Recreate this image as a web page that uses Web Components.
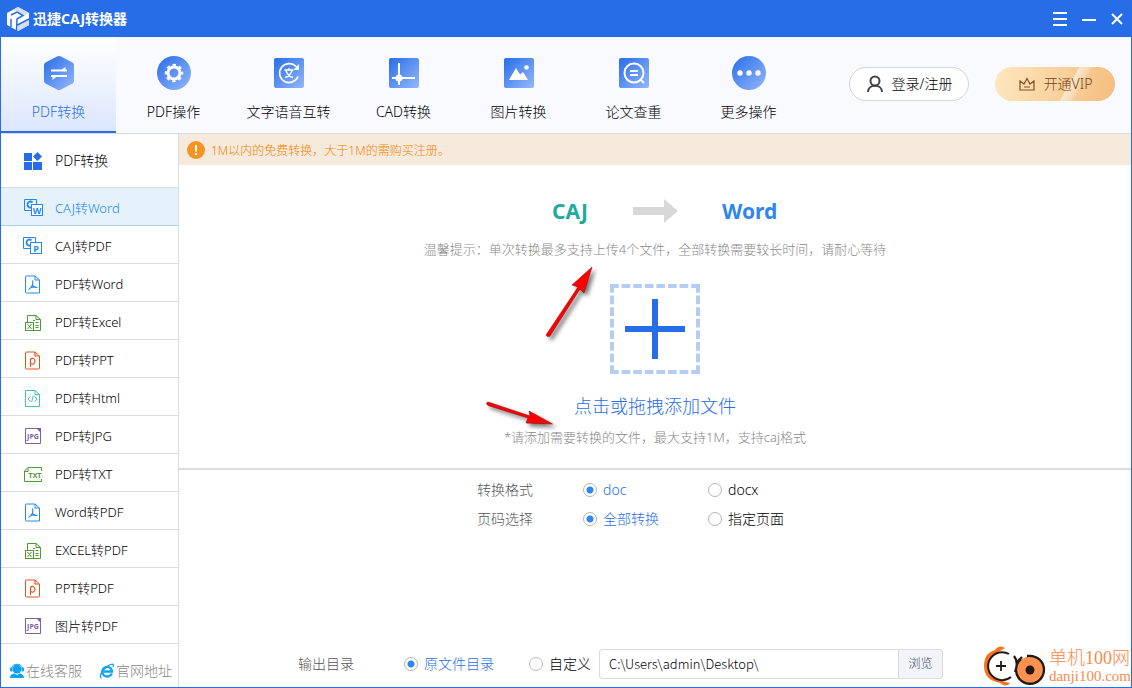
<!DOCTYPE html>
<html lang="zh-CN">
<head>
<meta charset="utf-8">
<meta name="viewport" content="width=device-width, initial-scale=1">
<title>迅捷CAJ转换器</title>
<style>
  body {
    margin: 0;
    font: 300 14px/20px "Noto Sans", "Noto Sans CJK SC", sans-serif;
    color: #000;
    --blue: #286de8;
    --line: #dcdcdc;
  }
</style>
</head>
<body>
<caj-app></caj-app>
<script>
const define = (name, html, setup) => {
  const tpl = document.createElement('template');
  tpl.innerHTML = html;
  customElements.define(name, class extends HTMLElement {
    constructor() {
      super();
      this.attachShadow({ mode: 'open' }).append(tpl.content.cloneNode(true));
    }
    connectedCallback() {
      if (setup && !this.ready) { this.ready = true; setup(this, this.shadowRoot); }
    }
  });
};

/* ---------- icons ---------- */
const grad = '<defs><linearGradient id="g" x1="0" y1="0" x2="1" y2="1"><stop offset="0" stop-color="#286de8"/><stop offset="1" stop-color="#94b8fb"/></linearGradient></defs>';
const square = grad + '<rect x="2" y="2" width="30" height="30" rx="2" fill="url(#g)"/>';
const disc = grad + '<circle cx="17" cy="17" r="17" fill="url(#g)"/>';
const glyph = (x, y, size, color, text, extra = '') =>
  `<text x="${x}" y="${y}" font-size="${size}" fill="${color}" text-anchor="middle" ${extra}>${text}</text>`;
const caj = (c) => `<g fill="none" stroke="#2389ee"><path d="M8 12.5H1.500V1.500H13.500V6"/><rect x="8.500" y="6.500" width="11" height="11" fill="#fff"/></g><path d="M9.500 4.300A3 3 0 1 0 8 9.500" fill="none" stroke="#2389ee" stroke-width="1.800"/>`
  + glyph(14, 15.500, 9, '#2389ee', c, 'font-weight="700"');
const pdfPage = '<g fill="none" stroke="#2389ee" stroke-linejoin="round"><path d="M12 2H3.500Q2.500 2 2.500 3V18Q2.500 19 3.500 19H16.500V6Z"/><path d="M12 2V6H16.500"/><path d="M9.200 6.500C10.500 7 9.500 9.500 9.500 11C8.500 13 7 15 5.500 15.500M9.500 11C10 12.500 12 13.500 14.500 13.500M7.500 13.500L12 12.800" stroke-width="1.200"/></g>';
const xlsPage = '<g fill="none" stroke="#4b9a33"><path d="M4.500 10V3.500H13L17.500 7.500V18.500H10.500"/><path d="M13 3.500V7.500H17.500M10 8.500H12M12.500 10.500H15.500M12.500 13.500H15.500M12.500 15.500H15.500"/><rect x="2.500" y="10.500" width="8" height="8" fill="#fff"/><path d="M4.500 12L8.500 17M8.500 12L4.500 17"/></g>';
const pptPage = '<g fill="none" stroke="#e5531a" stroke-linejoin="round"><path d="M12 2H3.500Q2.500 2 2.500 3V18Q2.500 19 3.500 19H15.500Q16.500 19 16.500 18V6Z"/><path d="M12 2V6H16.500M7.500 17V8.500M7.500 9.500C9 7.500 12 8.300 12 11.200C12 14.200 9 15 7.500 13" stroke-width="1.200"/></g>';
const jpgPage = '<g fill="none" stroke="#7d60a3"><path d="M14 2.500H2.500V17.500H17.500V6"/></g><path d="M13 2H18V7Z" fill="#7d60a3"/>' + glyph(10, 13, 7, '#7d60a3', 'JPG', 'font-weight="700"');

const ICONS = {
  logo: ['0 0 24 26', 24, 26, '<path d="M12 1L23 7V19L12 25L1 19V7Z" fill="#fff"/><path d="M12 1L23 7L12 13L17 9L7 4Z" fill="#d4dded"/><path d="M23 14V19L12 25V20Z" fill="#d4dded"/><path d="M5 9L11 6L17 9.500L11 13L10.500 25M5 13V21M11.500 19L23 13" fill="none" stroke="#286de8" stroke-width="1.500"/>'],
  menu: ['0 0 14 14', 14, 14, '<path d="M0 1H14M0 7H14M0 13H14" stroke="#fff" stroke-width="2"/>'],
  min: ['0 0 14 14', 14, 14, '<path d="M0 8H14" stroke="#fff" stroke-width="2"/>'],
  close: ['0 0 12 12', 12, 12, '<path d="M1 1L11 11M11 1L1 11" stroke="#fff" stroke-width="2"/>'],
  hex: ['0 0 34 34', 34, 34, grad + '<path d="M15 .5Q17-.5 19 .5L30.500 6.500Q32 7.500 32 9V25Q32 26.500 30.500 27.500L19 33.500Q17 34.500 15 33.500L3.500 27.500Q2 26.500 2 25V9Q2 7.500 3.500 6.500Z" fill="url(#g)"/><path d="M9 13.500H19.500L23.500 11V13.500H25V15.500H9ZM9 19H25V21H14L10.500 24V21H9Z" fill="#fff"/>'],
  gear: ['0 0 34 34', 34, 34, disc + '<circle cx="17" cy="17" r="6" fill="none" stroke="#fff" stroke-width="3"/><circle cx="17" cy="17" r="8" fill="none" stroke="#fff" stroke-width="2.500" stroke-dasharray="3.200 3.083" stroke-dashoffset="1.600"/>'],
  translate: ['0 0 34 34', 34, 34, square + '<path d="M24.500 11A9.500 9.500 0 1 0 26 20.500" fill="none" stroke="#fff" stroke-width="1.700"/><path d="M27 8V14H21.500Z" fill="#fff"/><path d="M12.500 14H21.500M17 12V14M14 14.500C15 18 17 20.500 21 21.500M20 14.500C19 18 17 20.500 13 21.500" stroke="#fff" stroke-width="1.400" fill="none"/>'],
  cad: ['0 0 34 34', 34, 34, square + '<path d="M12 7V29M5 22H28" stroke="#fff" stroke-width="2"/><circle cx="12" cy="22" r="3.500" fill="#fff"/>'],
  image: ['0 0 34 34', 34, 34, square + '<path d="M7 24L14 12L18 18.500L21 16L26 24Z" fill="#fff"/><circle cx="24.500" cy="11.500" r="2.300" fill="#fff"/>'],
  paper: ['0 0 34 34', 34, 34, square + '<circle cx="17" cy="17" r="9.500" fill="none" stroke="#fff" stroke-width="2"/><path d="M13 15H21M13 19H21M23 23L27 27" stroke="#fff" stroke-width="2"/>'],
  more: ['0 0 34 34', 34, 34, disc + '<g fill="#fff"><circle cx="8" cy="17" r="2.700"/><circle cx="17" cy="17" r="2.700"/><circle cx="26" cy="17" r="2.700"/></g>'],
  user: ['0 0 18 18', 18, 18, '<g fill="none" stroke="#444" stroke-width="2"><circle cx="9" cy="6" r="4.500"/><path d="M2 17C2 8.500 16 8.500 16 17"/></g>'],
  crown: ['0 0 18 16', 18, 16, '<path d="M2 14H16V5L12 8L9 2.500L6 8L2 5ZM6 11H12" fill="none" stroke="#805020" stroke-width="1.200"/>'],
  grid: ['0 0 20 20', 20, 20, '<path d="M1 2H9V10H1ZM1 11H9V19H1ZM10 11H19V19H10ZM14.500 1L19 5.500L14.500 10L10 5.500Z" fill="#286de8"/>'],
  cajw: ['0 0 20 20', 20, 20, caj('W')],
  cajp: ['1 0 20 20', 20, 20, caj('P')],
  pdf: ['0 0 20 20', 20, 20, pdfPage],
  xls: ['0 0 20 20', 20, 20, xlsPage],
  ppt: ['0 0 20 20', 20, 20, pptPage],
  html: ['0 0 20 20', 20, 20, '<g fill="none" stroke="#45bfc3"><path d="M12 2.500H2.500V18.500H16.500V6.500Z"/><path d="M12 2.500V6.500H16.500M7.500 8.500L5 11L7.500 13.500M11.500 8.500L14 11L11.500 13.500M10.300 7.500L8.700 14"/></g>'],
  jpg: ['0 0 20 20', 20, 20, jpgPage],
  txt: ['0 0 20 20', 20, 20, '<path d="M18.500 7V3.500H5L1.500 7V17.500H18.500V15M1.500 7.500H5V3.500" fill="none" stroke="#4b9a33"/>' + glyph(12, 14, 7, '#4b9a33', 'TXT', 'font-weight="700"')],
  warn: ['0 0 18 18', 18, 18, '<circle cx="9" cy="9" r="9" fill="#f39423"/><path d="M9 4V10.500M9 12V14" stroke="#fff" stroke-width="2"/>'],
  arrow: ['0 0 46 24', 46, 24, '<path d="M1 8H32V0L46 12L32 24V16H1Z" fill="#d8d8d8"/>'],
  service: ['0 0 16 16', 16, 16, '<g fill="#12a2f3"><circle cx="8" cy="6" r="4.500"/><rect x="1" y="4.500" width="2.500" height="4" rx="1"/><rect x="12.500" y="4.500" width="2.500" height="4" rx="1"/><path d="M1 15C1 11.500 4 10.500 5.500 10.500L8 12L10.500 10.500C12 10.500 15 11.500 15 15Z"/></g><path d="M2.500 5C3.500 0 12.500 0 13.500 5" fill="none" stroke="#12a2f3"/>'],
  ie: ['0 0 16 16', 16, 16, '<path d="M12.800 10.500A5 4.800 0 1 1 13 7.500V8.500H4.500" fill="none" stroke="#12a2f3" stroke-width="2.300"/><path d="M2.500 15C-.5 14.500 3 7 8 3.500C12 .5 15.500 0 14 4" fill="none" stroke="#12a2f3" stroke-width="1.300"/>'],
};
define('ui-icon', `<style>:host{display:block;flex:none;line-height:0}svg{display:block;font-family:"Open Sans","Noto Sans",sans-serif}</style>`, (el, root) => {
  const [box, w, h, body] = ICONS[el.getAttribute('name')];
  root.innerHTML += `<svg aria-hidden="true" viewBox="${box}" width="${w}" height="${h}">${body}</svg>`;
});
/* Puts the icon named by the host's "icon" attribute in front of its label. */
const addIcon = (el, root) => {
  const icon = document.createElement('ui-icon');
  icon.setAttribute('name', el.getAttribute('icon'));
  root.querySelector('.label').before(icon);
};

/* ---------- title bar ---------- */
define('title-bar', `
<style>
  :host{display:flex;align-items:center;height:37px;padding:0 8px 0 5px;background:var(--blue);color:#fff}
  h1{flex:1;margin:0 0 0 3px;font:inherit;font-weight:700}
  button{display:block;border:0;padding:0;background:none}
  nav{display:flex;align-items:center;gap:15px}
</style>
<ui-icon name="logo"></ui-icon><h1><slot></slot></h1>
<nav>
  <button aria-label="菜单"><ui-icon name="menu"></ui-icon></button>
  <button aria-label="最小化"><ui-icon name="min"></ui-icon></button>
  <button aria-label="关闭"><ui-icon name="close"></ui-icon></button>
</nav>`);

/* ---------- toolbar ---------- */
define('tool-tab', `
<style>
  :host{display:block;flex:0 1 115px}
  button{display:flex;flex-direction:column;align-items:center;gap:12px;width:100%;height:96px;padding:19px 0 0;border:0;border-bottom:2px solid transparent;box-sizing:border-box;background:none;font:inherit;color:#000;white-space:nowrap}
  :host([active]) button{background:linear-gradient(#fff,#dce7fd);border-bottom-color:var(--blue);color:#286de8}
</style>
<button><span class="label"><slot></slot></span></button>`, addIcon);
define('pill-button', `
<style>
  :host{display:block}
  button{display:flex;align-items:center;justify-content:center;gap:8px;width:120px;height:34px;padding:0;border:1px solid #d4d4d6;border-radius:17px;background:#fff;font:inherit;color:#000;white-space:nowrap}
  :host([gold]) button{border:0;color:#6e431b;background:linear-gradient(120deg,transparent 60%,#fff8 61%,#fff3 69%,transparent 70%),linear-gradient(100deg,#ffe7c0,#f5bd7e)}
</style>
<button><slot name="icon"></slot><span><slot></slot></span></button>`);
define('tool-bar', `
<style>
  :host{display:flex;align-items:center;justify-content:space-between;background:#f9faff;border-bottom:1px solid var(--line)}
  nav{display:flex;flex:0 1 805px}
  .account{display:flex;gap:26px;padding:0 16px 2px 0}
</style>
<nav>
  <tool-tab icon="hex" active>PDF转换</tool-tab>
  <tool-tab icon="gear">PDF操作</tool-tab>
  <tool-tab icon="translate">文字语音互转</tool-tab>
  <tool-tab icon="cad">CAD转换</tool-tab>
  <tool-tab icon="image">图片转换</tool-tab>
  <tool-tab icon="paper">论文查重</tool-tab>
  <tool-tab icon="more">更多操作</tool-tab>
</nav>
<div class="account">
  <pill-button><ui-icon slot="icon" name="user"></ui-icon>登录/注册</pill-button>
  <pill-button gold><ui-icon slot="icon" name="crown"></ui-icon>开通VIP</pill-button>
</div>`);

/* ---------- sidebar ---------- */
define('nav-item', `
<style>
  :host{display:block}
  a{display:flex;align-items:center;gap:12px;box-sizing:border-box;height:38px;padding:2px 0 0 22px;border-bottom:1px solid var(--line);font-size:13px;color:#000;text-decoration:none;white-space:nowrap}
  :host([active]) a{background:#e5f2fc;border-bottom-color:#a8d4e8;color:#2389ee}
  :host([heading]) a{height:54px;padding-top:0;font-size:14px}
</style>
<a href="#"><span class="label"><slot></slot></span></a>`, addIcon);
define('side-bar', `
<style>
  :host{display:flex;flex-direction:column;border-right:1px solid var(--line)}
  .links{display:flex;flex:1;align-items:center;justify-content:space-between;padding:10px 6px 0 8px}
  .links a{display:flex;align-items:center;gap:1px;color:#888;text-decoration:none;white-space:nowrap}
</style>
<nav>
  <nav-item heading icon="grid">PDF转换</nav-item>
  <nav-item active icon="cajw">CAJ转Word</nav-item>
  <nav-item icon="cajp">CAJ转PDF</nav-item>
  <nav-item icon="pdf">PDF转Word</nav-item>
  <nav-item icon="xls">PDF转Excel</nav-item>
  <nav-item icon="ppt">PDF转PPT</nav-item>
  <nav-item icon="html">PDF转Html</nav-item>
  <nav-item icon="jpg">PDF转JPG</nav-item>
  <nav-item icon="txt">PDF转TXT</nav-item>
  <nav-item icon="pdf">Word转PDF</nav-item>
  <nav-item icon="xls">EXCEL转PDF</nav-item>
  <nav-item icon="ppt">PPT转PDF</nav-item>
  <nav-item icon="jpg">图片转PDF</nav-item>
</nav>
<div class="links">
  <a href="#"><ui-icon name="service"></ui-icon>在线客服</a>
  <a href="#"><ui-icon name="ie"></ui-icon>官网地址</a>
</div>`);

/* ---------- main area ---------- */
define('notice-bar', `
<style>:host{display:flex;align-items:center;gap:6px;height:31px;padding-left:8px;background:#f6eadd;color:#f58200;font-size:12px}span{padding-top:2px}</style>
<ui-icon name="warn"></ui-icon><span><slot></slot></span>`);

define('drop-zone', `
<style>
  :host{display:flex;flex-direction:column;align-items:center;position:relative;padding:32px 0 21px;border-bottom:2px solid var(--line);text-align:center}
  .pair{display:grid;grid-template-columns:1fr 46px 1fr;gap:44px;align-items:center;height:28px;font-size:21px;font-weight:700;line-height:28px}
  .from{color:#20aa9e;text-align:right}.to{color:#2f86f0;text-align:left}
  p{margin:0;font-size:13px;color:#888}
  .tip{padding:14px 0 25px}
  button{display:flex;flex-direction:column;align-items:center;gap:20px;padding:0;border:0;background:none;font:inherit;font-size:18px;line-height:24px;color:#286de8}
  .note{padding-top:9px}
  .marks{position:absolute;left:calc(50% - 175px);top:95px;pointer-events:none;filter:drop-shadow(3px 3px 2px #0008)}
</style>
<div class="pair"><span class="from">CAJ</span><ui-icon name="arrow"></ui-icon><span class="to">Word</span></div>
<p class="tip">温馨提示：单次转换最多支持上传4个文件，全部转换需要较长时间，请耐心等待</p>
<button>
  <svg width="90" height="90" viewBox="0 0 90 90" aria-hidden="true">
    <path d="M0 2H90M0 88H90M2 0V90M88 0V90" stroke="#b5ccf3" stroke-width="4" stroke-dasharray="8.700 2.900"/>
    <path d="M15 45H75M45 15V75" stroke="#286de8" stroke-width="6"/>
  </svg>
  <span>点击或拖拽添加文件</span>
</button>
<p class="note">*请添加需要转换的文件，最大支持1M，支持caj格式</p>
<svg class="marks" width="120" height="180" viewBox="0 0 120 180" aria-hidden="true">
  <g fill="red" stroke="#8e1010" stroke-width=".6">
    <path d="M112 7L92 25L98 27L66 75Q68 78 70 76L100 29L104 33Z"/>
    <path d="M72.500 164L49 151L50 156L8 142Q5 143 8 145.500L48 158L46 163Z"/>
  </g>
</svg>`);

/* A labelled row of radio buttons; options are given as "a|b", the first is selected. */
define('option-row', `
<style>
  :host{display:block}
  fieldset{display:grid;grid-template-columns:106px 125px auto;align-items:center;margin:0;padding:0;border:0;line-height:20px;white-space:nowrap}
  .name{color:#555}
  label{display:flex;align-items:center;gap:6px}
  input{appearance:none;flex:none;width:14px;height:14px;margin:0;border:1px solid #b4b4b4;border-radius:50%;background:#fff}
  input:checked{background:radial-gradient(circle,#2f86f5 3px,#fff 4px)}
  label:has(:checked){color:#286de8}
</style>
<fieldset><span class="name"></span></fieldset>`, (el, root) => {
  const set = root.querySelector('fieldset');
  const name = el.getAttribute('label');
  set.setAttribute('aria-label', name);
  root.querySelector('.name').textContent = name;
  el.getAttribute('options').split('|').forEach((text, i) => {
    const label = document.createElement('label'), input = document.createElement('input');
    input.type = 'radio'; input.name = 'choice'; input.value = text; input.checked = i === 0;
    label.append(input, text);
    set.append(label);
  });
});

define('output-row', `
<style>
  :host{display:flex;align-items:center;gap:8px;padding:0 188px 8px 119px}
  form{display:flex;flex:0 1 344px;min-width:0;height:30px}
  input,button{box-sizing:border-box;border:1px solid #dadada;font:inherit;font-size:12px}
  input{flex:1;min-width:0;padding:0 9px;border-radius:3px 0 0 3px;color:#000;font-family:"Noto Sans CJK SC",sans-serif;font-size:13px}
  button{width:45px;margin-left:-1px;padding:0;border-radius:0 3px 3px 0;background:#f3f4f9;color:#40456a}
</style>
<option-row label="输出目录" options="原文件目录|自定义"></option-row>
<form><input type="text" aria-label="输出目录" value="C:\\Users\\admin\\Desktop\\"><button type="button">浏览</button></form>`);

define('site-mark', `
<style>
  :host{display:flex;align-items:center;gap:3px;color:#f98a4b;font-family:"Liberation Serif","Noto Sans CJK SC",serif;font-size:18px;line-height:20px;white-space:nowrap}
  small{display:block;font-size:15px;line-height:16px}
  svg{flex:none}
</style>
<svg width="63" height="42" viewBox="0 0 63 42" aria-hidden="true">
  <path d="M22 3Q16-1 12 5Q1 8 1 21Q1 35 17 38Q23 43 27 38L14 35Q4 31 5 20Q6 9 17 6Z" fill="#f97316"/>
  <circle cx="18" cy="21" r="13" fill="#fff"/>
  <path d="M26 9A14 14 0 1 0 28 32" fill="none" stroke="#231815" stroke-width="2"/>
  <path d="M18 16V26M13 21H23" stroke="#231815" stroke-width="1.800"/>
  <circle cx="47" cy="25" r="13.500" fill="#fb914f"/>
  <path d="M38 14A14 14 0 1 0 57 15Q52 10 44 11M31 11Q36 17 32 27M39 12L34 17" fill="none" stroke="#231815" stroke-width="2.300"/>
  <circle cx="47" cy="25" r="4.500" fill="#231815"/>
</svg>
<span>单机100网<small>danji100.com</small></span>`);

/* ---------- application frame ---------- */
define('caj-app', `
<style>
  :host{display:flex;flex-direction:column;position:relative;min-height:100vh;box-sizing:border-box;border:1px solid var(--blue);border-top:0;background:#fff}
  .body{display:grid;grid-template-columns:178px minmax(0,1fr);flex:1}
  main{display:flex;flex-direction:column}
  .options{display:grid;justify-content:center;gap:9px;padding:10px 0 24px}
  .options option-row{width:356px}
  output-row{margin-top:auto}
  site-mark{position:absolute;right:0;bottom:0}
</style>
<title-bar>迅捷CAJ转换器</title-bar>
<tool-bar></tool-bar>
<div class="body">
  <side-bar></side-bar>
  <main>
    <notice-bar>1M以内的免费转换，大于1M的需购买注册。</notice-bar>
    <drop-zone></drop-zone>
    <div class="options">
      <option-row label="转换格式" options="doc|docx"></option-row>
      <option-row label="页码选择" options="全部转换|指定页面"></option-row>
    </div>
    <output-row></output-row>
  </main>
</div>
<site-mark></site-mark>`);
</script>
</body>
</html>
